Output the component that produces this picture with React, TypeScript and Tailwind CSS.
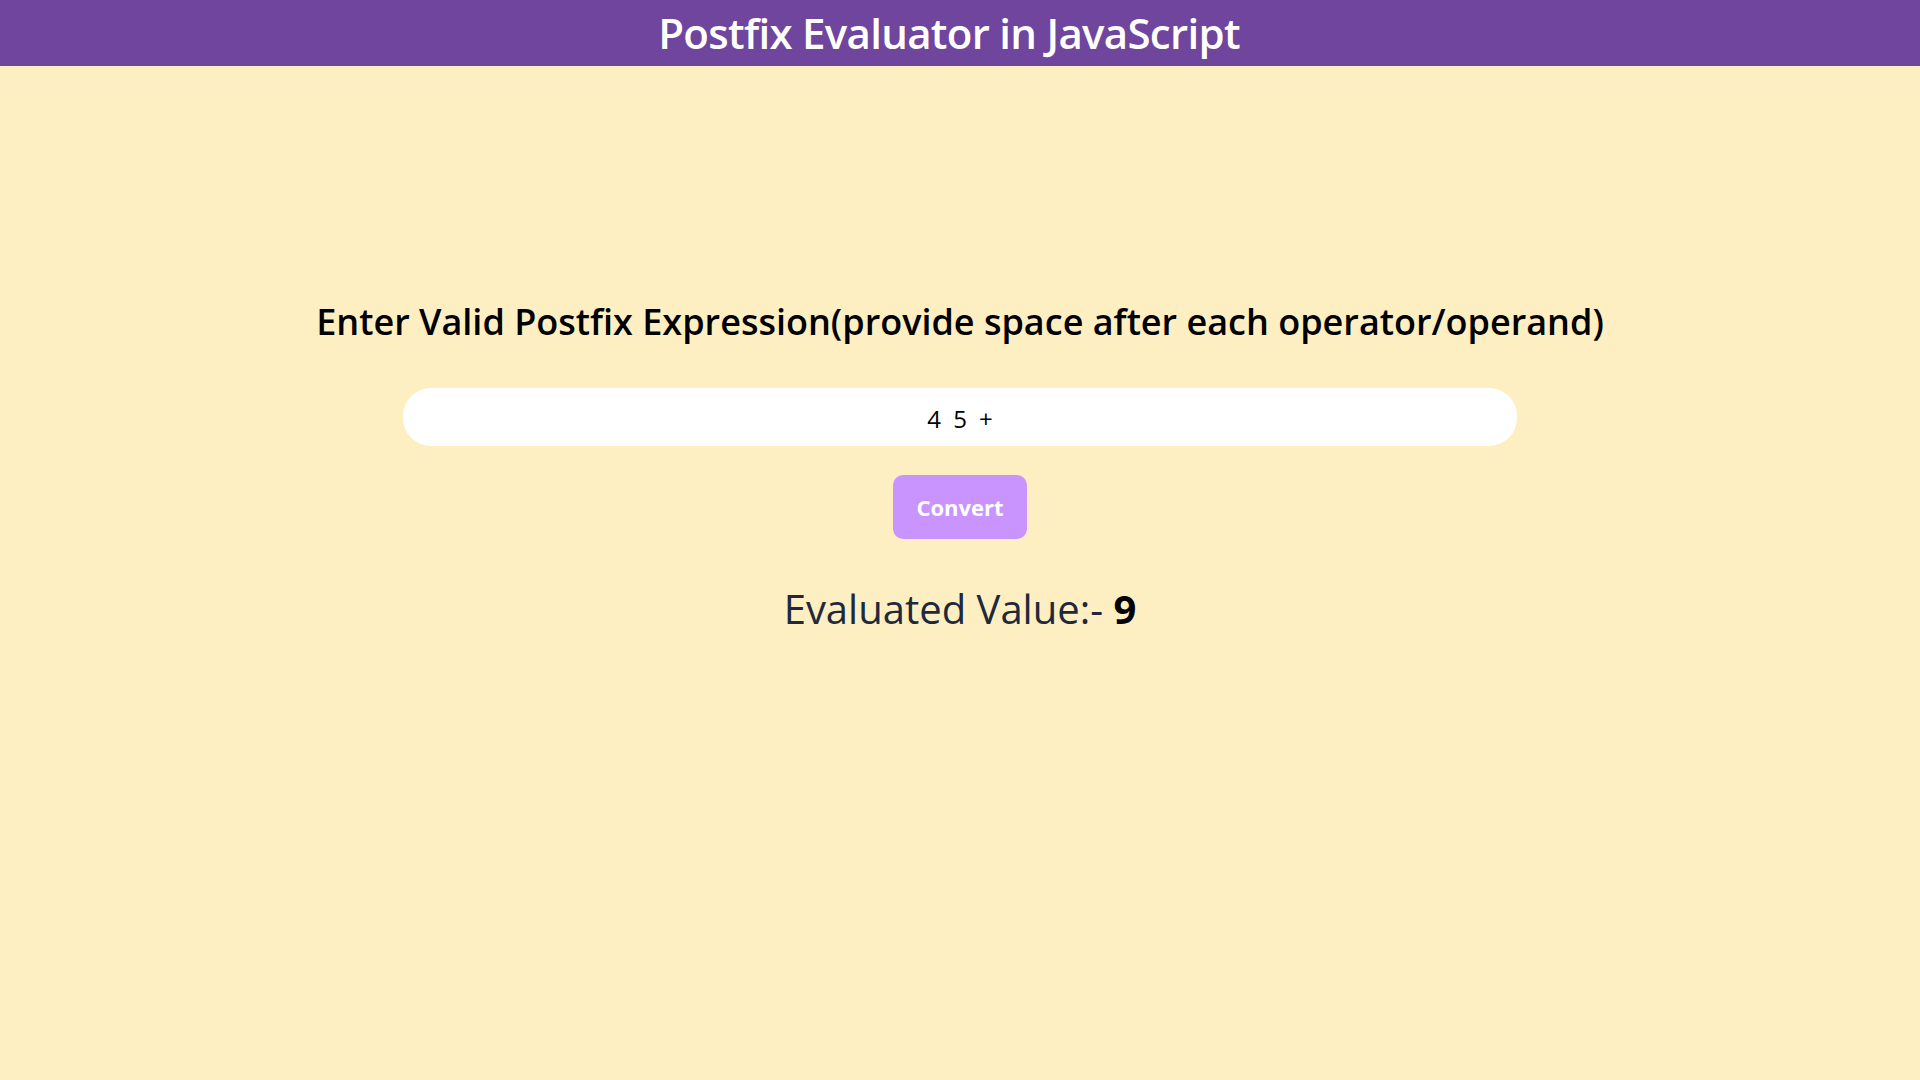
import { useState } from 'react';

const evaluatePostfix = (expr: string) => {
  const stack: number[] = [];
  const tokens = expr.trim().split(/\s+/).filter(Boolean);
  for (const t of tokens) {
    if (['+', '-', '*', '/', '^'].includes(t)) {
      const b = stack.pop() ?? 0;
      const a = stack.pop() ?? 0;
      if (t === '+') stack.push(a + b);
      else if (t === '-') stack.push(a - b);
      else if (t === '*') stack.push(a * b);
      else if (t === '/') stack.push(a / b);
      else stack.push(Math.pow(a, b));
    } else {
      stack.push(Number(t));
    }
  }
  return stack.length ? String(stack[stack.length - 1]) : '';
};

const App = () => {
  const [expression, setExpression] = useState('4 5 +');
  const [result, setResult] = useState('9');

  return (
    <div className="min-h-screen bg-[#feefc3] font-['Segoe_UI','Open_Sans',sans-serif]">
      {/* Title bar */}
      <header className="h-[66px] bg-[#6f459d] flex items-center justify-center pr-[22px]">
        <h1 className="text-[42px] leading-[66px] font-semibold tracking-[-0.7px] text-white">
          Postfix Evaluator in JavaScript
        </h1>
      </header>

      <main className="flex flex-col items-center pt-[232px]">
        <h2 className="text-[36px] leading-[48px] font-semibold text-black">
          Enter Valid Postfix Expression(provide space after each operator/operand)
        </h2>

        <input
          type="text"
          value={expression}
          onChange={(e) => setExpression(e.target.value)}
          className="mt-[42px] w-[1114px] h-[58px] rounded-[28px] bg-white pt-[3px] pl-[3px] text-center text-[24px] tracking-[3px] text-black outline-none"
        />

        <button
          onClick={() => setResult(evaluatePostfix(expression))}
          className="mt-[29px] w-[134px] h-[64px] rounded-[10px] bg-[#c994fd] text-white text-[22px] font-bold"
        >
          Convert
        </button>

        <p className="mt-[42px] text-[40px] leading-[56px] text-[#1e293b]">
          Evaluated Value:- <span className="font-bold text-black">{result}</span>
        </p>
      </main>
    </div>
  );
};

export default App;
